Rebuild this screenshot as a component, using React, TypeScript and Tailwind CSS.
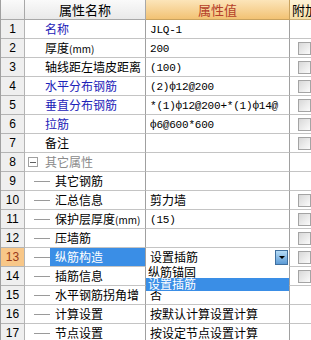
import React from 'react'

type Row = {
  no: number
  name: string
  value?: string
  blue?: boolean
  tree?: boolean
  group?: boolean
  check?: boolean
  selected?: boolean
  dropdown?: boolean
}

const rows: Row[] = [
  { no: 1, name: '名称', value: 'JLQ-1', blue: true },
  { no: 2, name: '厚度(mm)', value: '200', check: true },
  { no: 3, name: '轴线距左墙皮距离', value: '(100)', check: true },
  { no: 4, name: '水平分布钢筋', value: '(2)ф12@200', blue: true, check: true },
  { no: 5, name: '垂直分布钢筋', value: '*(1)ф12@200+*(1)ф14@', blue: true, check: true },
  { no: 6, name: '拉筋', value: 'ф6@600*600', blue: true, check: true },
  { no: 7, name: '备注', check: true },
  { no: 8, name: '其它属性', group: true },
  { no: 9, name: '其它钢筋', tree: true },
  { no: 10, name: '汇总信息', value: '剪力墙', tree: true, check: true },
  { no: 11, name: '保护层厚度(mm)', value: '(15)', tree: true, check: true },
  { no: 12, name: '压墙筋', tree: true, check: true },
  { no: 13, name: '纵筋构造', value: '设置插筋', tree: true, check: true, selected: true, dropdown: true },
  { no: 14, name: '插筋信息', tree: true, check: true },
  { no: 15, name: '水平钢筋拐角增', value: '否', tree: true },
  { no: 16, name: '计算设置', value: '按默认计算设置计算', tree: true },
  { no: 17, name: '节点设置', value: '按设定节点设置计算', tree: true },
]

const cjk = "font-['SimSun','Noto_Sans_CJK_SC',sans-serif]"

function Label({ text }: { text: string }) {
  const m = text.match(/^(.*)\(mm\)$/)
  if (!m) return <>{text}</>
  return (
    <>
      {m[1]}
      <span className="text-[10px]">(mm)</span>
    </>
  )
}

function Checkbox() {
  return (
    <div className="ml-[8px] h-[13px] w-[13px] shrink-0 border border-[#a4a4a4] bg-gradient-to-br from-[#d8d8d8] to-[#fbfbfb]" />
  )
}

function Value({ text }: { text: string }) {
  const ascii = /^[\x00-\x7Fф]+$/.test(text)
  return (
    <span
      className={
        ascii
          ? "whitespace-nowrap font-['Liberation_Mono',monospace] text-[11px] tracking-[-0.2px]"
          : 'whitespace-nowrap'
      }
    >
      {text}
    </span>
  )
}

export default function App() {
  return (
    <div className={`h-[340px] w-[311px] overflow-hidden bg-white text-[12px] text-black ${cjk}`}>
      {/* header */}
      <div className="flex h-[20px] border-l border-[#a0a0a0]">
        <div className="w-[24px] shrink-0 border-r border-b border-[#a8a8a8] bg-gradient-to-b from-[#fafafa] to-[#e9e9e9]" />
        <div className="flex w-[121px] shrink-0 items-center justify-center border-r border-b border-[#a8a8a8] bg-gradient-to-b from-[#fafafa] to-[#e9e9e9] text-[13px]">
          属性名称
        </div>
        <div className="flex w-[144px] shrink-0 items-center justify-center border-r border-b border-[#c9a25e] bg-gradient-to-b from-[#fce5b9] to-[#f2c273] text-[13px] text-[#b4402a]">
          属性值
        </div>
        <div className="flex flex-1 items-center overflow-hidden whitespace-nowrap border-b border-[#c9b07a] bg-gradient-to-b from-[#fdf3d8] to-[#f5e0a8] pl-[2px] text-[13px]">
          附加
        </div>
      </div>

      {rows.map((r) => (
        <div key={r.no} className="flex h-[19px] border-l border-[#a0a0a0]">
          <div
            className={`flex w-[24px] shrink-0 items-center justify-center border-r border-b border-[#b4b4b4] font-['Liberation_Sans',sans-serif] text-[12px] ${
              r.selected ? 'bg-[#f8c788] text-[#9a3a1a]' : 'bg-[#efefef]'
            }`}
          >
            {r.no}
          </div>
          <div className="flex w-[121px] shrink-0 items-center overflow-hidden border-r border-b border-r-[#a0a0a0] border-b-[#c4c4c4]">
            {r.group ? (
              <>
                <div className="ml-[3px] flex h-[10px] w-[10px] items-center justify-center border border-[#a0a0a0] bg-white">
                  <div className="h-px w-[6px] bg-[#606060]" />
                </div>
                <span className="ml-[7px] text-[#8a8a8a]">{r.name}</span>
              </>
            ) : r.tree ? (
              <>
                <div className="ml-[9px] h-px w-[16px] shrink-0 bg-[#9a9a9a]" />
                <div
                  className={`flex h-full flex-1 items-center whitespace-nowrap pl-[5px] ${
                    r.selected ? 'bg-[#3a8ee6] text-white' : ''
                  }`}
                >
                  <Label text={r.name} />
                </div>
              </>
            ) : (
              <span className={`ml-[20px] whitespace-nowrap ${r.blue ? 'text-[#1c22b8]' : ''}`}>
                <Label text={r.name} />
              </span>
            )}
          </div>
          <div className="relative flex w-[144px] shrink-0 items-center border-r border-b border-r-[#a0a0a0] border-b-[#c4c4c4] pl-[4px]">
            <div className="flex-1 overflow-hidden">{r.value && <Value text={r.value} />}</div>
            {r.dropdown && (
              <>
                <div className="mr-[1px] flex h-[15px] w-[13px] items-center justify-center border border-[#3f6f9e] bg-gradient-to-b from-[#b6dcf6] to-[#5c9bd6]">
                  <div className="h-0 w-0 border-x-[3px] border-t-[3px] border-x-transparent border-t-black" />
                </div>
                <div className="absolute left-0 right-0 top-full z-10 bg-white text-[12px] leading-[12px]">
                  <div className="h-[12px] pl-[2px]">纵筋锚固</div>
                  <div className="h-[13px] bg-[#3a8ee6] pl-[2px] text-white">设置插筋</div>
                </div>
              </>
            )}
          </div>
          <div className="flex flex-1 items-center border-b border-[#c4c4c4]">
            {r.check && <Checkbox />}
          </div>
        </div>
      ))}
    </div>
  )
}
